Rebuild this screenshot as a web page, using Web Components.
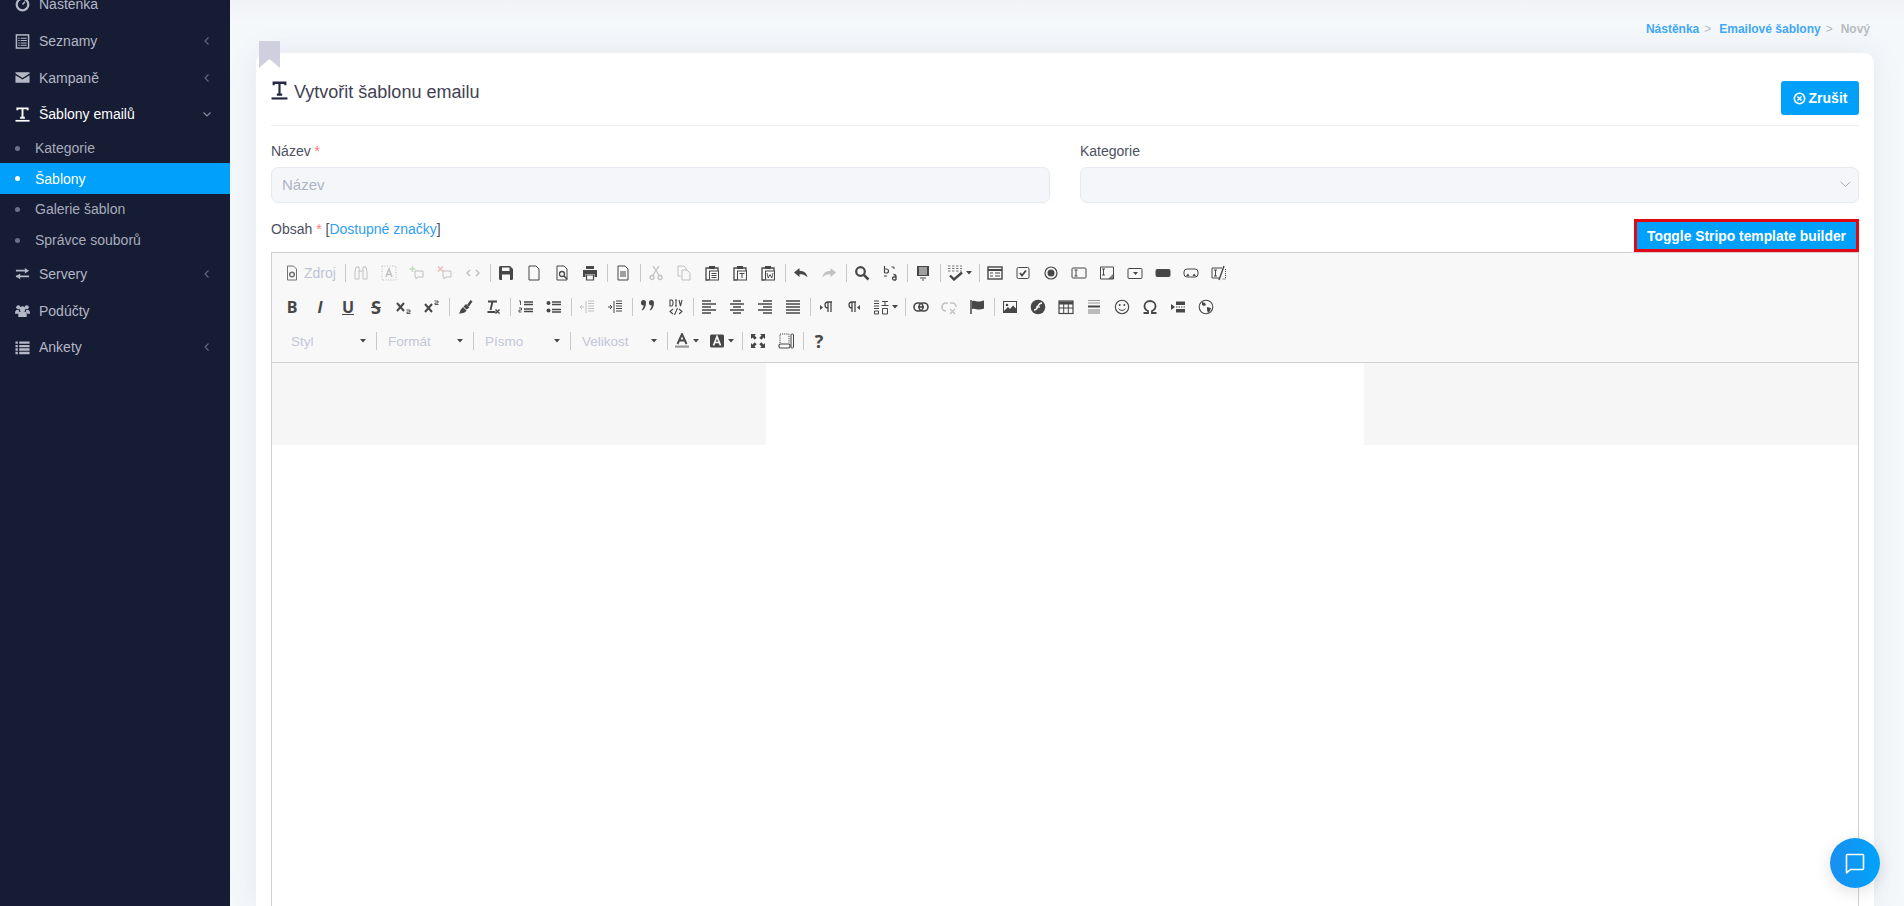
<!DOCTYPE html>
<html lang="cs"><head><meta charset="utf-8"><title>Vytvořit šablonu emailu</title>
<style>
html,body{margin:0;height:906px;overflow:hidden;font-family:"Liberation Sans",Arial,sans-serif;}
</style></head><body>
<app-shell>
  <side-nav></side-nav>
  <main-pane></main-pane>
</app-shell>
<chat-fab></chat-fab>
<script>
const I={
tpl:'<path d="M2.500 3.500V1.500h11v2M8 1.500v10M5.500 11.500h5" fill="none" stroke="currentColor" stroke-width="2"/><path d="M.5 14.700h15" stroke="currentColor" stroke-width="1.800"/>',
gauge:'<circle cx="8" cy="8" r="6.200" fill="none" stroke="currentColor" stroke-width="2.400"/><path d="M8 8l2.600-3" stroke="currentColor" stroke-width="1.600"/>',
list:'<rect x="1.500" y="1" width="13" height="14" fill="none" stroke="currentColor" stroke-width="1.600"/><path d="M3.500 4.500h1.500M6 4.500h6.500M3.500 7h1.500M6 7h6.500M3.500 9.500h1.500M6 9.500h6.500M3.500 12h1.500M6 12h6.500" stroke="currentColor" stroke-width="1.100"/>',
mail:'<path d="M.5 2.500h15v1.200L8 8.400.5 3.700zM.5 5.500L8 10.200l7.500-4.700v8H.5z" fill="currentColor"/>',
swap:'<path d="M1 5h10M1 11h14" stroke="currentColor" stroke-width="1.800"/><path d="M10.500 2L15 5l-4.500 3zM5.500 8L1 11l4.500 3z" fill="currentColor"/>',
users:'<circle cx="3.500" cy="4.500" r="2.200" fill="currentColor"/><circle cx="12.500" cy="4.500" r="2.200" fill="currentColor"/><circle cx="8" cy="6.500" r="3" fill="currentColor"/><path d="M0 11c0-3 1.500-3.800 3-3.800l1.200.6v3.700H0zM16 11c0-3-1.500-3.800-3-3.800l-1.200.6v3.700H16zM3.500 15v-3c0-2.700 2.200-3.400 4.500-3.400s4.500.7 4.500 3.400v3z" fill="currentColor"/>',
rows:'<path d="M.5 1.500h2.500V4H.5zM.5 5.200h2.500v2.500H.5zM.5 8.900h2.500v2.500H.5zM.5 12.600h2.500v2.500H.5zM4.500 1.500h11V4h-11zM4.500 5.200h11v2.500h-11zM4.500 8.900h11v2.500h-11zM4.500 12.600h11v2.500h-11z" fill="currentColor"/>'
};
const svg=(k,s=16)=>`<svg width="${s}" height="${s}" viewBox="0 0 16 16" aria-hidden="true">${I[k]}</svg>`;

class NavItem extends HTMLElement{
 connectedCallback(){
  const a=this.getAttribute('icon'),c=this.getAttribute('chev');
  this.attachShadow({mode:'open'}).innerHTML=`<style>
  :host{display:flex;align-items:center;height:36.700px;padding:0 19px 0 15px;color:#b4b7c6;font-size:14px}
  :host([open]){color:#fff}
  .i{display:flex;flex:none;width:15px;margin-right:9px}
  svg{display:block;width:15px;height:15px}
  .t{flex:1}
  svg.c{width:8px;height:8px;opacity:.5}
  </style><span class="i">${svg(a)}</span><span class="t"><slot></slot></span>
  ${c?`<svg class="c" viewBox="0 0 8 8"><path d="${c==='down'?'M.5 2.500L4 6l3.500-3.500':'M5.500.5L2 4l3.500 3.500'}" fill="none" stroke="currentColor" stroke-width="1.100"/></svg>`:''}`;
 }
}
customElements.define('nav-item',NavItem);
class NavSub extends HTMLElement{
 connectedCallback(){
  this.attachShadow({mode:'open'}).innerHTML=`<style>
  :host{display:flex;align-items:center;height:30.700px;padding-left:15px;color:#a8abbc;font-size:14px}
  :host([active]){background:#00a0fb;color:#fff}
  i{width:5px;height:5px;border-radius:50%;background:#6b7088;margin-right:15px}
  :host([active]) i{background:#fff}
  </style><i></i><slot></slot>`;
 }
}
customElements.define('nav-sub',NavSub);
class SideNav extends HTMLElement{
 connectedCallback(){
  this.attachShadow({mode:'open'}).innerHTML=`<style>
  :host{display:block;width:230px;flex:none;background:#161c34;height:906px;overflow:hidden}
  .w{margin-top:-14px}
  </style><div class="w">
  <nav-item icon="gauge">Nástěnka</nav-item>
  <nav-item icon="list" chev="left">Seznamy</nav-item>
  <nav-item icon="mail" chev="left">Kampaně</nav-item>
  <nav-item icon="tpl" chev="down" open>Šablony emailů</nav-item>
  <nav-sub>Kategorie</nav-sub>
  <nav-sub active>Šablony</nav-sub>
  <nav-sub>Galerie šablon</nav-sub>
  <nav-sub>Správce souborů</nav-sub>
  <nav-item icon="swap" chev="left">Servery</nav-item>
  <nav-item icon="users">Podúčty</nav-item>
  <nav-item icon="rows" chev="left">Ankety</nav-item>
  </div>`;
 }
}
customElements.define('side-nav',SideNav);

class FormField extends HTMLElement{
 connectedCallback(){
  const sel=this.hasAttribute('select'),ph=this.getAttribute('placeholder')||'',req=this.hasAttribute('required');
  this.attachShadow({mode:'open'}).innerHTML=`<style>
  :host{display:block}
  label{display:block;font-size:14px;line-height:17px;color:#4d5060;margin-bottom:7px}
  b{font-weight:400;color:#ff7b7b}
  .b{height:36px;box-sizing:border-box;background:#f4f6fa;border:1px solid #e6e9ef;border-radius:7px;display:flex;align-items:center;justify-content:space-between;padding:0 7px 2px 10px;font-size:15px;color:#b1b4c2}
  </style><label><slot></slot>${req?' <b>*</b>':''}</label><div class="b"><span>${ph}</span>${sel?'<svg width="11" height="7" viewBox="0 0 11 7"><path d="M.7.8l4.800 4.800L10.300.8" fill="none" stroke="#a6a9b3" stroke-width="1"/></svg>':''}</div>`;
 }
}
customElements.define('form-field',FormField);

class BlueBtn extends HTMLElement{
 connectedCallback(){
  this.attachShadow({mode:'open'}).innerHTML=`<style>
  :host{display:inline-flex;align-items:center;justify-content:center;background:#00a0fb;color:#fff;font-weight:700;font-size:14px;box-sizing:border-box}
  :host([kind=cancel]){width:78px;height:34px;border-radius:3px;gap:3px}
  :host([kind=toggle]){width:225px;height:33px;border:3px solid #e30613;font-size:13.850px}
  </style><slot></slot>`;
 }
}
customElements.define('blue-btn',BlueBtn);

/* ---- CKEditor toolbar ---- */
const S='fill="none" stroke="currentColor"';
const G={
source:`<path d="M3.500 1h6l3 3v11h-9z" ${S}/><circle cx="8" cy="9.500" r="2.300" ${S} stroke-width="1.500"/>`,
find2:`<path d="M3 2h3v12H2V7zM10 2h3l1 5v7h-4zM6 6h4" ${S}/>`,
selall:`<path d="M1 1h14v14H1z" ${S} stroke-dasharray="1 1.500"/><path d="M5 12l3-8 3 8M6 9.500h4" ${S} stroke-width="1.500"/>`,
cadd:`<path d="M6 6h8v6H9l-2 2v-2H6z" ${S}/><path d="M3.500 1v6M.5 4h6" stroke="#3a3" stroke-width="1.500"/>`,
crem:`<path d="M6 6h8v6H9l-2 2v-2H6z" ${S}/><path d="M1 1.500l5 5M6 1.500l-5 5" stroke="#d33" stroke-width="1.500"/>`,
code:`<path d="M5 5L2 8l3 3M11 5l3 3-3 3" ${S} stroke-width="1.500"/>`,
save:`<path d="M1 2.500A1.500 1.500 0 012.500 1H12l3 3v9.500a1.500 1.500 0 01-1.500 1.500h-11A1.500 1.500 0 011 13.500z" fill="currentColor"/><rect x="4" y="2.500" width="7.500" height="3.500" fill="#f8f8f8"/><rect x="4" y="9.500" width="8" height="5.500" fill="#f8f8f8"/>`,
doc:`<path d="M3 1h7l3 3v11H3z" ${S}/>`,
prev:`<path d="M3 1h7l3 3v11H3z" ${S}/><circle cx="8" cy="9" r="2.500" ${S} stroke-width="1.300"/><path d="M10 11l3 3" ${S} stroke-width="1.500"/>`,
print:`<path d="M4 1h8v3H4zM1 5h14v7h-2.500V9h-9v3H1z" fill="currentColor"/><path d="M4.500 10h7v5h-7z" ${S} stroke-width="1.200"/>`,
tdoc:`<path d="M3 1h7l3 3v11H3z" ${S}/><path d="M5 7h6M5 9h6M5 11h6" ${S}/>`,
cut:`<path d="M5 1l6 9M11 1L5 10" ${S} stroke-width="1.300"/><circle cx="4" cy="12.500" r="2" ${S} stroke-width="1.300"/><circle cx="12" cy="12.500" r="2" ${S} stroke-width="1.300"/>`,
copy:`<path d="M2 1h6l2 2v2M2 1v10h3M6 5h5l3 3v7H6z" ${S}/>`,
paste:`<path d="M5 3H2v12h3" ${S} stroke-width="1.300"/><path d="M11 3h3v3" ${S} stroke-width="1.300"/><rect x="5" y="1" width="6" height="3" fill="currentColor"/><rect x="5.500" y="6" width="9" height="9" ${S}/><path d="M7.500 8.500h5M7.500 10.500h5M7.500 12.500h5" ${S}/>`,
pastet:`<path d="M5 3H2v12h3" ${S} stroke-width="1.300"/><path d="M11 3h3v3" ${S} stroke-width="1.300"/><rect x="5" y="1" width="6" height="3" fill="currentColor"/><rect x="5.500" y="6" width="9" height="9" ${S}/><path d="M7.500 8.500h5M10 8.500V13" ${S}/>`,
pastew:`<path d="M5 3H2v12h3" ${S} stroke-width="1.300"/><path d="M11 3h3v3" ${S} stroke-width="1.300"/><rect x="5" y="1" width="6" height="3" fill="currentColor"/><rect x="5.500" y="6" width="9" height="9" ${S}/><path d="M7 8l1.200 5L10 9.500 11.800 13 13 8" ${S} stroke-width=".9"/>`,
undo:`<path d="M6.500 3L1 7.500l5.500 4.500V9.300c3 0 5.500.5 8 3-.5-4-3.500-6.500-8-6.600z" fill="currentColor"/>`,
redo:`<path d="M9.500 3l5.500 4.500-5.500 4.500V9.300c-3 0-5.500.5-8 3 .5-4 3.500-6.500 8-6.600z" fill="currentColor"/>`,
search:`<circle cx="6.500" cy="6.500" r="4.300" ${S} stroke-width="2.200"/><path d="M9.800 9.800l4.700 4.700" ${S} stroke-width="2.600"/>`,
replace:`<path d="M2.500 1v7M2.500 4h2a1.800 1.800 0 010 4h-2" ${S} stroke-width="1.200"/><path d="M9.500 2h2.500v2M2 11h3" ${S}/><path d="M11.500 9.500c1.500 0 2.500.5 2.500 2v3.500M14 12h-2a1.500 1.500 0 000 3h2" ${S} stroke-width="1.300"/>`,
blocks:`<path d="M2 1h12v10H2z" fill="currentColor"/><path d="M4 3h8M4 5h8M4 7h8M4 9h8" stroke="#f8f8f8"/><path d="M5 13h6M7 15h2" stroke="currentColor" stroke-width="1.200"/>`,
form:`<rect x="1" y="2" width="14" height="12" ${S} stroke-width="1.400"/><path d="M1 5h14" stroke="currentColor" stroke-width="2"/><path d="M3 8h3M3 11h3M8 8h5M8 11h5" ${S} stroke-width="1.200"/>`,
check:`<rect x="2" y="2.500" width="12" height="11" rx="1.500" ${S}/><path d="M5 8l2 2.500 4-5" ${S} stroke-width="1.800"/>`,
radio:`<circle cx="8" cy="8" r="6" ${S} stroke-width="1.200"/><circle cx="8" cy="8" r="3.500" fill="currentColor"/>`,
text:`<rect x="1" y="3" width="14" height="10" rx="1" ${S}/><path d="M3.500 5h3M5 5v6M3.500 11h3" ${S}/>`,
area:`<path d="M1.500 2h13v12h-13z" ${S}/><path d="M3 4h3M4.500 4v6M3 10h3" ${S}/><path d="M9 14l5.500-5.500V14z" fill="currentColor" opacity=".7"/>`,
select:`<rect x="1" y="3.500" width="14" height="10" rx="1" ${S}/><path d="M6 7h5L8.500 10z" fill="currentColor"/>`,
button:`<rect x=".5" y="4" width="15" height="8" rx="2" fill="currentColor"/>`,
imgbtn:`<rect x="1" y="4" width="14" height="8" rx="3" ${S}/><path d="M3 11l2-2.500L6.500 11zM9.500 11L11 8.500l2 2.500z" fill="currentColor"/>`,
hidden:`<path d="M1 3h10M1 3v10h8M3 5h3M4.500 5v6M3 11h3" ${S}/><path d="M13 1l-5 14" ${S} stroke-width="1.400"/><path d="M14.500 4v10H11" ${S} stroke-dasharray="1 1"/>`,
sub:`<path d="M1 4l7 8M8 4l-7 8" ${S} stroke-width="2"/><path d="M10.500 11h3.500v2h-3v1.500h3.500" ${S} stroke-width=".9"/>`,
sup:`<path d="M1 5l7 8M8 5l-7 8" ${S} stroke-width="2"/><path d="M10.500 2h3.500v2h-3v1.500h3.500" ${S} stroke-width=".9"/>`,
brush:`<path d="M10 6l3.500-5 2 1.500-3.500 5z" fill="currentColor"/><path d="M9 5l3.500 3.500-3 2L6.500 7.500zM6 8l3.500 3.500c-1 2-3 3-8 3 2-1 1.500-2.500 2-3.500z" fill="currentColor"/>`,
tx:`<path d="M3 2.500h9M7.500 2.500L5.500 11M2.500 13h8" ${S} stroke-width="1.900"/><path d="M10.500 10.500l4 4M14.500 10.500l-4 4" ${S} stroke-width="1.400"/>`,
ol:`<path d="M1 2h1.500v4M1 9h2.500v2H1v2h2.500" ${S} stroke-width=".9"/><path d="M6 3h9M6 5.500h9M6 10h9M6 12.500h9" ${S} stroke-width="1.300"/>`,
ul:`<circle cx="2.500" cy="4" r="2" fill="currentColor"/><circle cx="2.500" cy="11.500" r="2" fill="currentColor"/><path d="M6 3h9M6 5.500h9M6 10.500h9M6 13h9" ${S} stroke-width="1.300"/>`,
outd:`<path d="M7 2v12M9 2h6M9 4.500h6M9 7h6M9 9.500h6M9 12h6" ${S}/><path d="M5 8H1M3 6L1 8l2 2" ${S}/>`,
ind:`<path d="M7 2v12M9 2h6M9 4.500h6M9 7h6M9 9.500h6M9 12h6" ${S}/><path d="M1 8h4M3 6l2 2-2 2" ${S}/>`,
quote:`<path d="M1 3.500a2.500 2.500 0 015 0c0 4-1.500 6.500-3.500 8l-.8-.8C3 9.500 3.500 8 3.600 6.300A2.500 2.500 0 011 3.500zM9 3.500a2.500 2.500 0 015 0c0 4-1.500 6.500-3.500 8l-.8-.8c1.300-1.200 1.800-2.700 1.900-4.400A2.500 2.500 0 019 3.500z" fill="currentColor"/>`,
div:`<path d="M2 1v6h1.500a1.500 3 0 000-6zM7 1h2M8 1v6M7 7h2M11 1l1.500 6L14 1M5 10l-3 2.500L5 15M11 10l3 2.500-3 2.500M9.500 9l-3 7" ${S} stroke-width="1.100"/>`,
al:`<path d="M1 2h9M1 5h14M1 8h9M1 11h14M1 14h9" ${S} stroke-width="1.400"/>`,
ac:`<path d="M4 2h8M1 5h14M4 8h8M1 11h14M4 14h8" ${S} stroke-width="1.400"/>`,
ar:`<path d="M6 2h9M1 5h14M6 8h9M1 11h14M6 14h9" ${S} stroke-width="1.400"/>`,
aj:`<path d="M1 2h14M1 5h14M1 8h14M1 11h14M1 14h14" ${S} stroke-width="1.400"/>`,
ltr:`<path d="M2 6l3 2.500L2 11z" fill="currentColor"/><path d="M10 3a3 3 0 000 6M10 3v10M13 3v10M9 3h5" ${S} stroke-width="1.300"/>`,
rtl:`<path d="M14 6l-3 2.500 3 2.500z" fill="currentColor"/><path d="M6 3a3 3 0 000 6M6 3v10M9 3v10M5 3h5" ${S} stroke-width="1.300"/>`,
lang:`<path d="M1 2h5M1 4.500h5M1 7h5M1 9.500h5M1.500 12h4v3h-4zM9 2.500h6M12 2.500v4M8.500 6.500h7M9.500 9.500h5v5.500h-5z" ${S}/>`,
link:`<rect x="1" y="4" width="9" height="8" rx="4" ${S} stroke-width="1.600"/><rect x="6" y="4" width="9" height="8" rx="4" ${S} stroke-width="1.600"/><path d="M5 8h6" ${S} stroke-width="1.600"/>`,
unlink:`<path d="M7 4H5a4 4 0 000 8M9 4h2a4 4 0 014 4" ${S} stroke-width="1.600"/><path d="M9 10l5 5M14 10l-5 5" ${S} stroke-width="1.300"/>`,
flag:`<path d="M2 1v14" ${S} stroke-width="1.500"/><path d="M3 2c3-1 4.500.5 6.500.5S13 2 15 1.500v8c-2 .8-3.500 1-5.500 1S6 9 3 10z" fill="currentColor"/>`,
image:`<rect x="1" y="2" width="14" height="12" fill="currentColor"/><rect x="2" y="3" width="12" height="9" fill="#f8f8f8"/><circle cx="5" cy="6" r="1.300" fill="currentColor"/><path d="M2 12l4-4 2 2 3-3.500 3 3V12z" fill="currentColor"/>`,
flash:`<circle cx="8" cy="8" r="7.300" fill="currentColor"/><path d="M4 11c3 0 3-2 4-4s2-3 4-3" fill="none" stroke="#f8f8f8" stroke-width="1.500"/><path d="M6 8h4" stroke="#f8f8f8" stroke-width="1.300"/>`,
table:`<rect x="1" y="2" width="14" height="12.500" ${S} stroke-width="1.200"/><path d="M1 4h14" stroke="currentColor" stroke-width="3"/><path d="M1 9h14M5.700 4v10M10.300 4v10" ${S}/>`,
hr:`<path d="M2 1.500h12M2 4h12" stroke="#999"/><path d="M2 7.500h12" stroke="currentColor" stroke-width="2"/><rect x="2" y="10" width="12" height="5" fill="#bbb"/>`,
smile:`<circle cx="8" cy="8" r="6.700" ${S} stroke-width="1.100"/><circle cx="5.700" cy="6" r="1" fill="currentColor"/><circle cx="10.300" cy="6" r="1" fill="currentColor"/><path d="M4.500 9.500c1.500 2.500 5.500 2.500 7 0" ${S}/>`,
omega:`<path d="M1.500 14h4.500v-2C3.500 11 2.500 9 2.500 7c0-3 2.500-5 5.500-5s5.500 2 5.500 5c0 2-1 4-3.500 5v2h4.500" ${S} stroke-width="1.800"/>`,
pbreak:`<path d="M1 5l4 3-4 3z" fill="currentColor"/><path d="M6 2.500h9v3.500H6zM6 10h9v3.500H6z" fill="currentColor"/><path d="M6 8h9" ${S} stroke-dasharray="1.500 1"/>`,
globe:`<circle cx="8" cy="8" r="6.800" ${S} stroke-width="1.100"/><path d="M4 3l3 1 1 2-2 1-2-1zM9 8l4 1-1 3-2 2-1-3z" fill="currentColor"/>`,
atext:`<path d="M3.500 11L8 1l4.500 10M5.200 7.500h5.600" ${S} stroke-width="1.900"/><rect x="1" y="12.500" width="14" height="2.200" fill="#999"/>`,
abg:`<rect x="1" y="1.500" width="14" height="13" rx="1.500" fill="currentColor"/><path d="M4.500 12.500L8 3.500l3.500 9M5.800 9.500h4.400" fill="none" stroke="#f8f8f8" stroke-width="1.700"/>`,
max:`<path d="M1 6V1h5L4.500 2.500l2.200 2.200-2 2-2.200-2.200zM15 6V1h-5l1.500 1.500-2.200 2.200 2 2 2.200-2.200zM1 10v5h5l-1.500-1.500 2.200-2.200-2-2-2.200 2.200zM15 10v5h-5l1.500-1.500-2.200-2.200 2-2 2.200 2.200z" fill="currentColor"/>`,
sblock:`<path d="M2 10V1h9v9" ${S} stroke-dasharray="1.200 1"/><rect x="1" y="11" width="11" height="4" rx="1.500" ${S} stroke-width="1.200"/><rect x="13" y="1" width="2.500" height="14" rx="1" ${S}/>`,
spell:`<path d="M1 1h14M1 3.500h14M1 6h14" stroke="currentColor" stroke-dasharray="2.500 1.500" opacity=".7"/><path d="M3 10.500l4 4 8-7" ${S} stroke-width="2.400"/>`
};
class TbBtn extends HTMLElement{
 connectedCallback(){
  const g=this.getAttribute('g'),op=this.getAttribute('dim'),arrow=this.hasAttribute('arrow');
  this.attachShadow({mode:'open'}).innerHTML=`<style>
  :host{display:flex;align-items:center;justify-content:center;width:28px;height:28px;color:#474747;flex:none;gap:3px}
  :host([arrow]){width:34px}
  :host([wide]){width:64px;justify-content:flex-start;padding-left:6px;box-sizing:border-box;gap:4px}
  :host([cw]){width:35px}
  svg.g{opacity:${op||1};flex:none}
  svg.a{flex:none}
  .l{font-size:14px;color:#c0c3d6}
  </style><svg class="g" width="16" height="16" viewBox="0 0 16 16">${G[g]||''}</svg>${this.textContent?`<span class="l">${this.textContent}</span>`:''}${arrow?'<svg class="a" width="6" height="4" viewBox="0 0 6 4"><path d="M0 0h6L3 3.500z" fill="#474747"/></svg>':''}`;
 }
}
customElements.define('tb-btn',TbBtn);
class TbLetter extends HTMLElement{
 connectedCallback(){
  this.attachShadow({mode:'open'}).innerHTML=`<style>
  :host{display:flex;align-items:center;justify-content:center;width:28px;height:28px;flex:none;color:#474747;font:700 16px/1 "Open Sans",sans-serif}
  :host([it]){font-style:italic}
  :host([un]){text-decoration:underline}
  :host([st]){text-decoration:line-through;font-size:18px}
  :host([q]){font-size:18px}
  </style><slot></slot>`;
 }
}
customElements.define('tb-letter',TbLetter);
class TbSep extends HTMLElement{
 connectedCallback(){
  this.attachShadow({mode:'open'}).innerHTML=`<style>:host{display:block;width:1px;height:18px;background:#c8c8c8;margin:0 1px 0 3px;flex:none}</style>`;
 }
}
customElements.define('tb-sep',TbSep);
class TbCombo extends HTMLElement{
 connectedCallback(){
  this.attachShadow({mode:'open'}).innerHTML=`<style>
  :host{display:flex;align-items:center;width:92px;height:28px;box-sizing:border-box;padding:0 7px 0 10px;flex:none;color:#c3c6d8;font-size:13.500px;justify-content:space-between}
  </style><span><slot></slot></span><svg width="6" height="4" viewBox="0 0 6 4"><path d="M0 0h6L3 3.500z" fill="#474747"/></svg>`;
 }
}
customElements.define('tb-combo',TbCombo);
class TbRow extends HTMLElement{
 connectedCallback(){
  this.attachShadow({mode:'open'}).innerHTML=`<style>:host{display:flex;align-items:center;height:34px}:host([inset]){padding-left:3px}</style><slot></slot>`;
 }
}
customElements.define('tb-row',TbRow);
function row(spec){
 return spec.split(' ').map(k=>{
  if(k==='|')return '<tb-sep></tb-sep>';
  let m;
  if(m=k.match(/^L:(.)(:\w+)?$/))return `<tb-letter ${m[2]?m[2].slice(1):''}>${m[1]}</tb-letter>`;
  if(m=k.match(/^C:(.+)$/))return `<tb-combo>${m[1]}</tb-combo>`;
  const [g,...fl]=k.split(':');
  let at='';
  fl.forEach(f=>{at+=f==='d'?' dim=".3"':f==='a'?' arrow':f==='c'?' arrow cw':''});
  return `<tb-btn g="${g}"${at}></tb-btn>`;
 }).join('');
}
class RichEditor extends HTMLElement{
 connectedCallback(){
  const r1=`<tb-btn g="source" wide dim=".75">Zdroj</tb-btn><tb-sep></tb-sep>`+row('find2:d selall:d cadd:d crem:d code:d | save doc prev print | tdoc | cut:d copy:d paste pastet pastew | undo redo:d | search replace | blocks | spell:a | form check radio text area select button imgbtn hidden');
  const r2=row('L:B L:I:it L:U:un L:S:st sub sup | brush tx | ol ul | outd:d ind | quote div | al ac ar aj | ltr rtl lang:a | link unlink:d flag | image flash table hr smile omega pbreak globe');
  const r3=row('C:Styl | C:Formát | C:Písmo | C:Velikost | atext:c abg:c | max sblock | L:?:q');
  this.attachShadow({mode:'open'}).innerHTML=`<style>
  :host{display:block;border:1px solid #d1d1d1;border-bottom:0;box-sizing:border-box;background:#fff;flex:1}
  .tb{background:#f8f8f8;border-bottom:1px solid #d1d1d1;padding:3px 6px;height:110px;box-sizing:border-box}
  .pv{display:grid;grid-template-columns:1fr 598px 1fr;height:82px}
  .pv i{background:#f6f6f6}
  .pv i:nth-child(2){background:#fff}
  </style><div class="tb"><tb-row>${r1}</tb-row><tb-row>${r2}</tb-row><tb-row inset>${r3}</tb-row></div>
  <div class="pv"><i></i><i></i><i></i></div>`;
 }
}
customElements.define('rich-editor',RichEditor);

class MainPane extends HTMLElement{
 connectedCallback(){
  this.attachShadow({mode:'open'}).innerHTML=`<style>
  :host{display:flex;flex-direction:column;flex:1;min-width:0;height:906px;box-sizing:border-box;padding:0 30px 0 26px;background:linear-gradient(180deg,#f1f2f5 0,#f5f8fb 22px,#f5f8fb 100%);overflow:hidden;font-size:14px}
  .crumbs{height:53px;flex:none;box-sizing:border-box;padding-top:22px;display:flex;justify-content:flex-end;padding-right:4px;font-size:12px;line-height:15px;font-weight:700;color:#b9bcc4}
  .crumbs a{color:#42a9f6}
  .crumbs s{text-decoration:none;font-weight:400;margin:0 8px 0 5px}
  .card{background:#fff;border-radius:10px 10px 0 0;flex:1;padding:0 15px;display:flex;flex-direction:column;position:relative;min-height:0;box-shadow:0 0 30px rgba(70,85,110,.1)}
  .mark{position:absolute;left:3px;top:-12px;width:21px;height:27px}
  .head{display:flex;align-items:flex-start;justify-content:space-between;height:73px;box-sizing:border-box;border-bottom:1px solid #eef0f4;padding-top:28px;flex:none}
  .title{display:flex;align-items:center;gap:6px;font-size:18px;line-height:22px;color:#3f4254}
  .title svg{color:#23273f;margin-top:-4px}
  .grid{display:grid;grid-template-columns:779px 779px;column-gap:30px;margin-top:17px;flex:none}
  .lab{display:flex;justify-content:space-between;height:33px;margin-top:16px;flex:none}
  .lab span{font-size:14px;line-height:17px;color:#4d5060;margin-top:1.500px}
  .lab b{font-weight:400;color:#ff7b7b}
  .lab a{color:#2fa0f5}
  </style>
  <div class="crumbs"><a>Nástěnka</a><s>&gt;</s><a>Emailové šablony</a><s>&gt;</s><span>Nový</span></div>
  <div class="card">
   <svg class="mark" viewBox="0 0 21 27"><path d="M0 0h21v27L10.500 18 0 27z" fill="#cfcfe0"/></svg>
   <div class="head"><div class="title"><svg width="17" height="19" viewBox="0 0 16 16" preserveAspectRatio="none">${I.tpl}</svg><span>Vytvořit šablonu emailu</span></div>
    <blue-btn kind="cancel"><svg width="13" height="13" viewBox="0 0 14 14"><circle cx="7" cy="7" r="5.600" fill="none" stroke="#fff" stroke-width="1.700"/><path d="M4.800 4.800l4.400 4.400M9.200 4.800l-4.400 4.400" stroke="#fff" stroke-width="1.500"/></svg>Zrušit</blue-btn></div>
   <div class="grid"><form-field required placeholder="Název">Název</form-field><form-field select>Kategorie</form-field></div>
   <div class="lab"><span>Obsah <b>*</b> [<a>Dostupné značky</a>]</span><blue-btn kind="toggle">Toggle Stripo template builder</blue-btn></div>
   <rich-editor></rich-editor>
  </div>`;
 }
}
customElements.define('main-pane',MainPane);
class AppShell extends HTMLElement{
 connectedCallback(){ this.attachShadow({mode:'open'}).innerHTML=`<style>:host{display:flex;height:906px;overflow:hidden}</style><slot></slot>`; }
}
customElements.define('app-shell',AppShell);
class ChatFab extends HTMLElement{
 connectedCallback(){
  this.attachShadow({mode:'open'}).innerHTML=`<style>
  :host{position:fixed;left:1830px;top:838px;width:50px;height:50px;border-radius:50%;background:linear-gradient(90deg,#1a8fee,#00a3fb);box-shadow:0 4px 16px rgba(0,0,0,.12);display:flex;align-items:center;justify-content:center}
  </style><svg width="22" height="22" viewBox="0 0 22 22"><path d="M2.500 3.500a1 1 0 011-1h15a1 1 0 011 1v13a1 1 0 01-1 1H6.500l-4 3.500z" fill="none" stroke="#fff" stroke-width="1.600" stroke-linejoin="round"/></svg>`;
 }
}
customElements.define('chat-fab',ChatFab);
</script>
</body></html>
